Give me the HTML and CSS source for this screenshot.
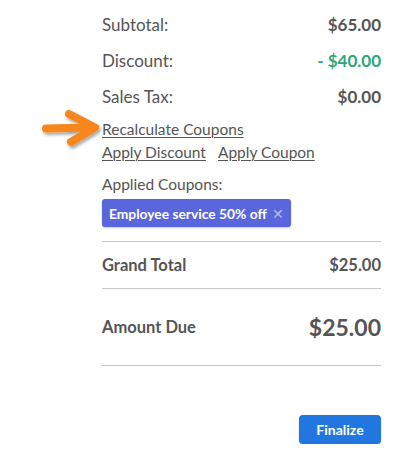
FILE: index.html
```html
<!DOCTYPE html>
<html>
<head>
<meta charset="utf-8">
<link rel="stylesheet" href="styles.css">
</head>
<body>
<div class="summary">
  <div class="row"><span>Subtotal:</span><strong>$65.00</strong></div>
  <div class="row"><span>Discount:</span><strong class="green">- $40.00</strong></div>
  <div class="row"><span>Sales Tax:</span><strong>$0.00</strong></div>
  <div class="links">
    <div class="linkline recalc">
      <svg class="arrow" width="66" height="48" viewBox="0 0 66 48">
        <defs>
          <filter id="sh" x="-20%" y="-30%" width="150%" height="170%">
            <feDropShadow dx="1.5" dy="2.5" stdDeviation="1.8" flood-color="#000" flood-opacity="0.35"/>
          </filter>
        </defs>
        <g filter="url(#sh)" fill="none" stroke="#f7871e" stroke-width="8" stroke-linecap="round" stroke-linejoin="round">
          <path d="M6 23.5 L52 22.5"/>
          <path d="M29 9 L55 22.5 L31 37"/>
        </g>
      </svg>
      <a href="#">Recalculate Coupons</a>
    </div>
    <div class="linkline"><a href="#">Apply Discount</a><a href="#">Apply Coupon</a></div>
  </div>
  <div class="applied">Applied Coupons:</div>
  <div class="badge">Employee service 50% off <span class="x">✕</span></div>
  <div class="total"><strong>Grand Total</strong><strong class="tv">$25.00</strong></div>
  <div class="due"><strong>Amount Due</strong><strong class="big">$25.00</strong></div>
  <div class="actions"><button class="finalize">Finalize</button></div>
</div>
</body>
</html>
```
FILE: styles.css
```css
html, body { margin: 0; padding: 0; background: #fff; }
body {
  font-family: "Lato", "Liberation Sans", sans-serif;
  color: #555;
  font-size: 17px;
}
.summary {
  margin-left: 102px;
  width: 279px;
  padding-top: 6px;
}
.row {
  display: flex;
  justify-content: space-between;
  align-items: center;
  height: 36px;
}
.row strong { font-weight: 700; }
.green { color: #2ea57a; }
.links { margin-top: 3px; font-size: 15.5px; }
.linkline {
  height: 23px;
  display: flex;
  align-items: center;
  gap: 12px;
}
.recalc { position: relative; }
.arrow {
  position: absolute;
  left: -62px;
  top: -12px;
}
.linkline a {
  color: #555;
  text-decoration: underline;
  text-underline-offset: 2px;
  text-decoration-thickness: 1px;
}
.applied {
  margin-top: 10px;
  height: 23px;
  line-height: 23px;
  font-size: 15.5px;
}
.badge {
  display: inline-flex;
  align-items: center;
  margin-top: 3px;
  height: 28px;
  padding: 0 7px;
  background: #5a67dc;
  color: #fff;
  font-weight: 700;
  font-size: 13.8px;
  border-radius: 3px;
  box-shadow: 0 1px 2px rgba(0,0,0,0.2);
}
.badge .x {
  margin-left: 5px;
  font-weight: 400;
  color: #b8bdf0;
  font-size: 14px;
}
.total {
  margin-top: 14px;
  border-top: 1px solid #c8c8c8;
  border-bottom: 1px solid #c8c8c8;
  height: 46px;
  display: flex;
  justify-content: space-between;
  align-items: center;
  font-size: 16.5px;
}
.tv { font-weight: 700; }
.due {
  height: 76px;
  border-bottom: 1px solid #c8c8c8;
  display: flex;
  justify-content: space-between;
  align-items: center;
  font-size: 16.5px;
}
.big { font-size: 23px; }
.actions {
  display: flex;
  justify-content: flex-end;
  margin-top: 49px;
}
.finalize {
  font-family: inherit;
  background: #2176e0;
  color: #fff;
  border: 0;
  border-radius: 4px;
  width: 82px;
  height: 29px;
  font-size: 14px;
  font-weight: 700;
  box-shadow: 0 1px 2px rgba(0,0,0,0.2);
}
```
